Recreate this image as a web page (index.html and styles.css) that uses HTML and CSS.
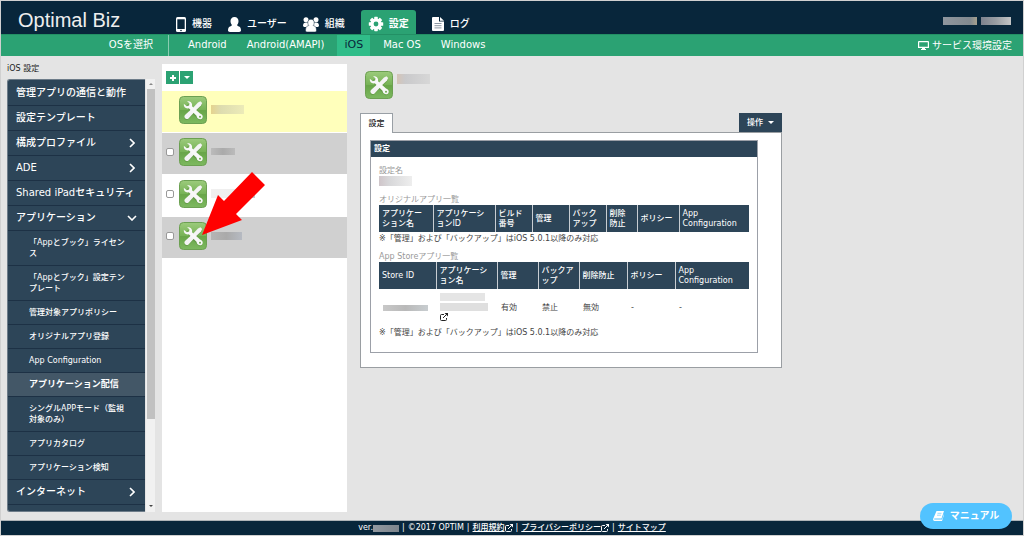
FILE: index.html
```html
<!DOCTYPE html>
<html lang="ja">
<head>
<meta charset="utf-8">
<title>Optimal Biz</title>
<link rel="stylesheet" href="styles.css">
</head>
<body>
<svg class="defs" aria-hidden="true">
  <defs>
    <linearGradient id="green" x1="0" y1="0" x2="0" y2="1">
      <stop offset="0" stop-color="#9ccb7c"/><stop offset=".5" stop-color="#76b255"/><stop offset=".52" stop-color="#68a548"/><stop offset="1" stop-color="#7db960"/>
    </linearGradient>
    <symbol id="tools" viewBox="0 0 28 28">
      <rect x=".5" y=".5" width="27" height="27" rx="4" fill="url(#green)" stroke="#6ca052"/>
      <g fill="none" stroke="#4d8034" stroke-opacity=".4" stroke-linecap="round" transform="translate(0 1)">
        <path d="M9.500 9.500 21 21" stroke-width="4.500"/><path d="M21 7.500 7.500 21" stroke-width="4"/>
      </g>
      <path d="M21.500 5.300l1.700 1.700-1.200 2.500-8.500 8-2.500-2.500 8-8.500z" fill="#f4f4f4"/>
      <path d="M12 13.500l3 3-5.500 6c-2 2-5.500-1.500-3.500-3.500z" fill="#f4f4f4"/>
      <path d="M8 5.300c3.200-.8 5.800 1.700 5 4.900l8 7.300c2.200.8 3.300 2.500 2.500 4.300-.8 1.700-3 2-4.500.8-.9-.8-1.300-1.800-1.500-2.800l-7.700-7.500c-3 .8-5.300-1.200-5-4.500l3 2.400 2.300-.7.400-2.200z" fill="#f8f8f8"/>
      <circle cx="21" cy="20.800" r="1" fill="#6ca94c"/>
    </symbol>
    <symbol id="person" viewBox="0 0 13 15">
      <path d="M6.500 0c2.500 0 4 1.700 4 4 0 1.600-.5 3-1.500 4 .2.800 1 1 2 1.500 1.500.6 2 1.800 2 4.500q-1 1-2 1H2q-1 0-2-1c0-2.700.5-3.900 2-4.500 1-.5 1.800-.7 2-1.500C3 7 2.500 5.600 2.500 4c0-2.300 1.500-4 4-4z" fill="#fff"/>
    </symbol>
    <symbol id="external" viewBox="0 0 8 8">
      <path d="M4 1.500H1.500q-1 0-1 1V6.500q0 1 1 1h4q1 0 1-1V5M3 5 6.500 1.500" fill="none" stroke="currentColor"/>
      <path d="M4.500 0H8v3.500z" fill="currentColor"/>
    </symbol>
    <symbol id="chevron" viewBox="0 0 6 10"><path d="M1 1l4 4-4 4" fill="none" stroke="#fff" stroke-width="1.600"/></symbol>
  </defs>
</svg>

<header class="top">
  <div class="brand">Optimal Biz</div>
  <nav class="tabs" aria-label="メイン">
    <a class="tab" href="#"><svg class="i-phone" viewBox="0 0 10 15"><rect width="10" height="15" rx="1.500" fill="#fff"/><rect x="1.300" y="2.300" width="7.400" height="9.700" fill="#08263b"/><circle cx="5" cy="13.500" r=".8" fill="#08263b"/></svg>機器</a>
    <a class="tab" href="#"><svg class="i-user"><use href="#person"/></svg>ユーザー</a>
    <a class="tab" href="#"><svg class="i-group" viewBox="0 0 16 15" fill="#fff"><circle cx="3" cy="2.800" r="2.500"/><circle cx="13" cy="2.800" r="2.500"/><path d="M0 9c0-2.500 1-3.500 3-3.500h10c2 0 3 1 3 3.500l-1 1H1z"/><path d="M8 2.300c2 0 3.200 1.300 3.200 3.200 0 1.500-.4 2.200-1 3C13 9 13.500 11 13.500 14l-1 1h-9l-1-1c0-3 .5-5 3.300-5.500-.6-.8-1-1.500-1-3C4.800 3.600 6 2.300 8 2.300z" stroke="#08263b" stroke-width=".5"/></svg>組織</a>
    <a class="tab tab-on" href="#" aria-current="page"><svg class="i-gear" viewBox="0 0 16 16"><g fill="#fff"><g id="teeth"><rect x="6.200" y=".8" width="3.600" height="14.400" rx=".6"/><rect x=".8" y="6.200" width="14.400" height="3.600" rx=".6"/></g><use href="#teeth" transform="rotate(45 8 8)"/><circle cx="8" cy="8" r="5.600"/></g><circle cx="8" cy="8" r="2.400" fill="#2ba273"/></svg>設定</a>
    <a class="tab" href="#"><svg class="i-doc" viewBox="0 0 12 14"><path d="M0 1q0-1 1-1h6v4.500h5V13q0 1-1 1H1q-1 0-1-1z" fill="#fff"/><path d="M8 0l4 3.700H8z" fill="#fff"/><path d="M2.500 6.500h7M2.500 8.700h7M2.500 10.900h7" stroke="#8a97a3"/></svg>ログ</a>
  </nav>
  <div class="account"><span class="mask mask-a"></span><span class="mask mask-b"></span></div>
</header>

<div class="osbar">
  <div class="os-label">OSを選択</div>
  <nav class="os-list" aria-label="OS">
    <a href="#">Android</a><a href="#">Android(AMAPI)</a><a class="os-on" href="#" aria-current="page">iOS</a><a href="#">Mac OS</a><a href="#">Windows</a>
  </nav>
  <a class="env" href="#"><svg class="i-screen" viewBox="0 0 11 9"><path d="M1 .6h9q.4 0 .4.400v5.300H.6V1Q.6.600 1 .6z" fill="none" stroke="#fff" stroke-width="1.200"/><path d="M4 6.500h3v1.500h1v1H3V8h1z" fill="#fff"/></svg>サービス環境設定</a>
</div>

<main class="main">
  <aside class="side">
    <h1 class="side-title">iOS 設定</h1>
    <div class="side-body">
      <nav class="menu" aria-label="iOS 設定">
        <a class="item" href="#">管理アプリの通信と動作</a>
        <a class="item" href="#">設定テンプレート</a>
        <a class="item" href="#">構成プロファイル<svg class="chev"><use href="#chevron"/></svg></a>
        <a class="item" href="#">ADE<svg class="chev"><use href="#chevron"/></svg></a>
        <a class="item" href="#">Shared iPadセキュリティ</a>
        <a class="item" href="#">アプリケーション<svg class="chev chev-open"><use href="#chevron"/></svg></a>
        <a class="sub" href="#">「Appとブック」ライセンス</a>
        <a class="sub" href="#">「Appとブック」設定テンプレート</a>
        <a class="sub" href="#">管理対象アプリポリシー</a>
        <a class="sub" href="#">オリジナルアプリ登録</a>
        <a class="sub" href="#">App Configuration</a>
        <a class="sub sub-on" href="#" aria-current="page">アプリケーション配信</a>
        <a class="sub" href="#">シングルAPPモード（監視対象のみ）</a>
        <a class="sub" href="#">アプリカタログ</a>
        <a class="sub" href="#">アプリケーション検知</a>
        <a class="item" href="#">インターネット<svg class="chev"><use href="#chevron"/></svg></a>
        <span class="item"></span>
      </nav>
      <div class="bar" aria-hidden="true"><span class="arrow up"></span><span class="thumb"></span><span class="arrow down"></span></div>
    </div>
  </aside>

  <section class="list" aria-label="設定一覧">
    <div class="tools">
      <button class="tool" aria-label="追加"><svg class="i-plus" viewBox="0 0 6 6"><path d="M3 0v6M0 3h6" stroke="#fff" stroke-width="2"/></svg></button>
      <button class="tool" aria-label="メニュー"><span class="caret"></span></button>
    </div>
    <div class="row row-sel"><span class="check-space"></span><svg class="app"><use href="#tools"/></svg><span class="mask mask-1"></span></div>
    <label class="row row-gray"><input class="check" type="checkbox" aria-label="設定 1"><svg class="app"><use href="#tools"/></svg><span class="mask mask-2"></span></label>
    <label class="row"><input class="check" type="checkbox" aria-label="設定 2"><svg class="app"><use href="#tools"/></svg><span class="mask mask-3"></span></label>
    <label class="row row-gray"><input class="check" type="checkbox" aria-label="設定 3"><svg class="app"><use href="#tools"/></svg><span class="mask mask-4"></span></label>
    <svg class="pointer" viewBox="0 0 64 64" aria-hidden="true"><path d="M0 63 16 23 22 29 50 0 63 13 34 42 40 48z" fill="#f00"/></svg>
  </section>

  <section class="detail">
    <div class="detail-head"><svg class="app"><use href="#tools"/></svg><span class="mask mask-5"></span></div>
    <div class="panel-tabs"><button class="panel-tab">設定</button><button class="action">操作<span class="caret"></span></button></div>
    <div class="panel">
      <div class="box">
        <h2 class="box-title">設定</h2>
        <div class="box-body">
          <div class="label">設定名</div>
          <div class="mask mask-6"></div>
          <div class="label">オリジナルアプリ一覧</div>
          <table class="grid">
            <colgroup><col class="w54"><col class="w63"><col class="w37"><col class="w37"><col class="w37"><col class="w31"><col class="w42"><col></colgroup>
            <thead><tr><th>アプリケーション名</th><th>アプリケーシ<wbr>ョンID</th><th>ビルド番号</th><th>管理</th><th>バックアップ</th><th>削除<br>防止</th><th>ポリシー</th><th>App Configuration</th></tr></thead>
          </table>
          <p class="note">※「管理」および「バックアップ」はiOS 5.0.1以降のみ対応</p>
          <div class="label">App Storeアプリ一覧</div>
          <table class="grid">
            <colgroup><col class="w57"><col class="w61"><col class="w41"><col class="w41"><col class="w48"><col class="w48"><col></colgroup>
            <thead><tr><th>Store ID</th><th>アプリケーション名</th><th>管理</th><th>バックアップ</th><th>削除防止</th><th>ポリシー</th><th>App Configuration</th></tr></thead>
            <tbody><tr><td><span class="mask mask-7"></span></td><td><span class="mask mask-8"></span><span class="mask mask-9"></span><a class="ext" href="#" aria-label="開く"><svg class="i-ext"><use href="#external"/></svg></a></td><td>有効</td><td>禁止</td><td>無効</td><td>-</td><td>-</td></tr></tbody>
          </table>
          <p class="note">※「管理」および「バックアップ」はiOS 5.0.1以降のみ対応</p>
        </div>
      </div>
    </div>
  </section>
</main>

<footer class="foot">
  <span class="ver">ver.<span class="mask mask-v"></span></span><span>|</span><span>©2017 OPTIM</span><span>|</span><a href="#">利用規約<svg class="i-ext"><use href="#external"/></svg></a><span>|</span><a href="#">プライバシーポリシー<svg class="i-ext"><use href="#external"/></svg></a><span>|</span><a href="#">サイトマップ</a>
</footer>
<button class="manual"><svg class="i-book" viewBox="0 0 11 10"><path d="M3.500 0H11L8.500 7.500H1.500q-.8.600 0 1H9L11 3v1L9 10H1.500Q-.5 9.500.3 7.500z" fill="#fff"/><path d="M4.500 2.300h4M4 4.200h4" stroke="#52c3ff" stroke-width=".6"/></svg>マニュアル</button>
</body>
</html>
```
FILE: styles.css
```css
* { box-sizing: border-box; }
body {
  margin: 0;
  height: 100vh;
  display: flex;
  flex-direction: column;
  overflow: hidden;
  border: 1px solid #d0d0d0;
  background: #e4e4e4;
  color: #444;
  font: 8px/10px "DejaVu Sans", "Noto Sans CJK JP", sans-serif;
}
a { color: inherit; text-decoration: none; }
button { border: 0; padding: 0; font: inherit; color: inherit; }
h1, h2, p { margin: 0; }
svg { flex: none; }
.defs { position: absolute; width: 0; height: 0; }

.top { display: flex; flex: none; height: 33px; background: #08263b; color: #fff; }
.brand { width: 167px; padding: 7px 0 0 17px; color: #eee; font: 20px/24px "Liberation Sans", Arial, sans-serif; }
.tabs { display: flex; align-items: flex-end; font-size: 10px; font-weight: 500; }
.tab { display: flex; align-items: center; gap: 6px; height: 24px; padding: 4px 8px 0; white-space: nowrap; }
.tab-on { background: #2ba273; border-radius: 3px 3px 0 0; margin: 0 8px; padding: 4px 7px 0; gap: 5px; font-weight: 700; }
.i-phone { width: 10px; height: 15px; }
.i-user { width: 13px; height: 15px; }
.i-group { width: 16px; height: 15px; }
.i-gear { width: 16px; height: 16px; }
.i-doc { width: 12px; height: 14px; }
.account { margin-left: auto; display: flex; gap: 4px; padding: 16px 12px 0 0; }

.osbar { display: flex; flex: none; height: 22px; background: #2ba273; color: #fff; font-size: 10px; line-height: 20px; border-top: 1px solid #239065; }
.os-label { width: 168px; padding-right: 15px; text-align: right; border-right: 1px solid #8accb1; }
.os-list { display: flex; padding-left: 9px; }
.os-list a { padding: 0 10px; }
.os-list .os-on { background: #30bd89; color: #08263b; padding: 0 7px; margin: 0 3px; font-size: 11px; }
.env { margin-left: auto; display: flex; align-items: center; gap: 3px; padding-right: 11px; }
.i-screen { width: 11px; height: 9px; }

.main { flex: 1; min-height: 0; display: flex; padding: 8px 0; }
.side { flex: none; width: 148px; margin: 0 7px 0 6px; display: flex; flex-direction: column; }
.side-title { font-size: 8px; font-weight: 400; line-height: 10px; padding-bottom: 5px; color: #222; }
.side-body { flex: 1; min-height: 0; display: flex; gap: 1px; }
.menu { flex: 1; overflow: hidden; padding-top: 1px; border: 1px solid #6d7c89; border-right: 0; border-radius: 3px 0 0 3px; background: #2d4558; color: #fff; }
.item { display: flex; align-items: center; justify-content: space-between; height: 25px; padding: 0 10px 0 8px; border-bottom: 1px solid #1d3145; font-size: 10px; font-weight: 500; white-space: nowrap; }
.sub { display: block; padding: 6px 13px 6px 21px; border-bottom: 1px solid #1d3145; line-height: 11px; font-weight: 500; }
.sub-on { background: #435767; font-size: 9px; font-weight: 700; }
.chev { width: 6px; height: 10px; }
.chev-open { transform: rotate(90deg); }
.bar { width: 9px; background: #f1f1f1; display: flex; flex-direction: column; align-items: center; }
.arrow { border: 2px solid transparent; height: 4px; }
.up { border-bottom-color: #888; margin: 2px 0 4px; }
.down { border-top-color: #444; margin: auto 0 3px; }
.thumb { width: 8px; height: 330px; background: #c1c1c1; }

.list { position: relative; flex: none; width: 185px; background: #fff; }
.tools { display: flex; gap: 1px; padding: 7px 4px; height: 27px; }
.tool { width: 13px; height: 13px; background: #2ba273; display: flex; align-items: center; justify-content: center; }
.i-plus { width: 6px; height: 6px; }
.caret { border: 3px solid transparent; border-top-color: #fff; border-bottom: 0; }
.row { display: flex; align-items: center; height: 42px; padding: 0 4px 4px; border-bottom: 1px solid #fff; }
.row-sel { background: #ffffbb; }
.row-gray { background: #d0d0d0; }
.check, .check-space { flex: none; width: 8px; height: 8px; margin: 0 5px 0 0; }
.check { appearance: none; border: 1px solid #999; border-radius: 2px; background: #fff; }
.app { width: 28px; height: 28px; margin-right: 4px; }
.pointer { position: absolute; left: 40px; top: 108px; width: 64px; height: 64px; }

.detail { flex: 0 1 422px; margin-left: 13px; }
.detail-head { display: flex; align-items: flex-start; height: 49px; padding: 7px 5px; }
.panel-tabs { display: flex; justify-content: space-between; height: 19px; }
.panel-tab { width: 33px; height: 20px; background: #fff; border: 1px solid #999fa5; border-bottom: 0; color: #222; position: relative; font-weight: 500; }
.action { display: flex; align-items: center; justify-content: center; gap: 5px; width: 43px; background: #2d4558; color: #fff; font-weight: 500; }
.panel { background: #fff; border: 1px solid #9a9ea2; padding: 7px 23px 14px 9px; }
.box { border: 1px solid #9ca0a8; }
.box-title { background: #2d4558; color: #fff; font-size: 8px; line-height: 16px; padding: 0 3px; font-weight: 700; }
.box-body { padding: 8px 8px 7px; }
.label { color: #999; padding-top: 1px; }
.grid { width: 100%; border-collapse: collapse; table-layout: fixed; }
.grid th { height: 27px; padding: 0 3px; background: #2d4558; color: #fff; text-align: left; font-weight: 500; border: 0 solid #c8cdd2; border-right-width: 1px; }
.grid th:last-child { border-right: 0; }
.grid td { height: 37px; padding: 3px 4px; }
.note { padding: 2px 0 7px; }
.w31 { width: 31px; } .w37 { width: 37px; } .w41 { width: 41px; } .w42 { width: 42px; }
.w48 { width: 48px; } .w54 { width: 54px; } .w57 { width: 57px; } .w61 { width: 61px; } .w63 { width: 62px; }
.i-ext { width: 8px; height: 8px; vertical-align: middle; }
.ext { display: block; line-height: 8px; color: #222; }

.mask { display: block; height: 9px; background: linear-gradient(90deg, #c5c0bf, #d0d0d0, #dedede); }
.mask-a { width: 34px; height: 8px; background: linear-gradient(90deg, #8f969e, #81898f 80%, #a5a08e); }
.mask-b { width: 30px; height: 8px; background: linear-gradient(90deg, #7d828e, #989da2, #c3c5c6); }
.mask-1 { width: 33px; background: linear-gradient(90deg, #e5d38e, #dddcaf 30%, #ecebb8); }
.mask-2 { width: 24px; height: 7px; background: linear-gradient(90deg, #bbb, #aaa, #bbb); }
.mask-3 { width: 44px; background: linear-gradient(90deg, #f1f0f0, #eee, #bfc8cf); }
.mask-4 { width: 31px; height: 8px; background: linear-gradient(90deg, #b5b5b5, #aaa, #b6bac2); }
.mask-5 { width: 33px; height: 10px; margin-top: 3px; background: linear-gradient(90deg, #d5c4b7, #c9c9cb 25%, #d7d7d7); }
.mask-6 { width: 33px; height: 10px; margin-bottom: 8px; background: linear-gradient(90deg, #cfc5c9, #d7d7d9 30%, #eee); }
.mask-7 { width: 45px; height: 6px; background: linear-gradient(90deg, #c8c8c8, #b9b9b9, #c8cdd0); }
.mask-8 { width: 45px; height: 8px; margin-bottom: 2px; background: #e5e5e5; }
.mask-9 { width: 48px; height: 8px; margin-bottom: 2px; background: #dfdfdf; }
.mask-v { width: 26px; height: 7px; background: linear-gradient(90deg, #9299a0, #7d858d); }

.foot { flex: none; height: 15px; display: flex; align-items: center; justify-content: center; gap: 3px; background: #08263b; color: #fff; border-top: 1px solid #aeb4b8; font-weight: 500; }
.foot a { text-decoration: underline; white-space: nowrap; }
.ver { display: flex; align-items: center; }
.manual { position: absolute; right: 12px; bottom: 7px; width: 92px; height: 26px; border-radius: 13px; background: #52c3ff; color: #fff; display: flex; align-items: center; justify-content: center; gap: 6px; font-size: 10px; font-weight: 700; }
.i-book { width: 11px; height: 10px; }
```
